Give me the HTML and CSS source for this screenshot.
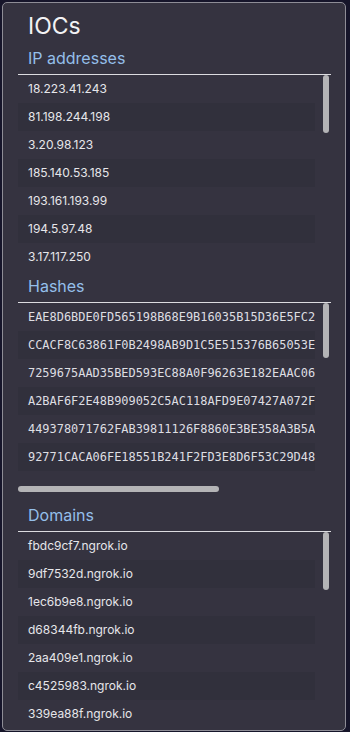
FILE: index.html
```html
<!DOCTYPE html>
<html lang="en">
<head>
<meta charset="utf-8">
<title>IOCs</title>
<link rel="stylesheet" href="styles.css">
</head>
<body>
<div class="panel">
  <h1 class="title">IOCs</h1>

  <h2 class="section">IP addresses</h2>
  <div class="list">
    <div class="rows">
      <div class="row">18.223.41.243</div>
      <div class="row">81.198.244.198</div>
      <div class="row">3.20.98.123</div>
      <div class="row">185.140.53.185</div>
      <div class="row">193.161.193.99</div>
      <div class="row">194.5.97.48</div>
      <div class="row">3.17.117.250</div>
    </div>
    <div class="vbar"><div class="vthumb"></div></div>
  </div>

  <h2 class="section">Hashes</h2>
  <div class="hashbox">
    <div class="rows rows-hash">
      <div class="row mono">EAE8D6BDE0FD565198B68E9B16035B15D36E5FC2A1B9E04D7C3F28A6B5E91D04</div>
      <div class="row mono">CCACF8C63861F0B2498AB9D1C5E515376B65053E7F2A94C10B8D6E35A29F4C71</div>
      <div class="row mono">7259675AAD35BED593EC88A0F96263E182EAAC06B4D17E9A3C5F82061DE4B7A9</div>
      <div class="row mono">A2BAF6F2E48B909052C5AC118AFD9E07427A072F9C3E61B5D08A4F27E6B13C58</div>
      <div class="row mono">449378071762FAB39811126F8860E3BE358A3B5A0E7D2C94F61B8A53D7C20E16</div>
      <div class="row mono">92771CACA06FE18551B241F2FD3E8D6F53C29D48B1A7E05C36F9D248E0A7B63F</div>
    </div>
    <div class="vbar vbar-hash"><div class="vthumb vthumb-hash"></div></div>
    <div class="hbar"><div class="hthumb"></div></div>
  </div>

  <h2 class="section section-domains">Domains</h2>
  <div class="list">
    <div class="rows">
      <div class="row">fbdc9cf7.ngrok.io</div>
      <div class="row">9df7532d.ngrok.io</div>
      <div class="row">1ec6b9e8.ngrok.io</div>
      <div class="row">d68344fb.ngrok.io</div>
      <div class="row">2aa409e1.ngrok.io</div>
      <div class="row">c4525983.ngrok.io</div>
      <div class="row">339ea88f.ngrok.io</div>
    </div>
    <div class="vbar"><div class="vthumb"></div></div>
  </div>
</div>
</body>
</html>
```
FILE: styles.css
```css
html, body {
  margin: 0;
  padding: 0;
  height: 732px;
  overflow: hidden;
  background: #16152a;
}

body {
  font-family: Inter, "Noto Sans", sans-serif;
  color: #e4e4e8;
}

.panel {
  box-sizing: border-box;
  margin: 2px 0 0 2px;
  width: 344px;
  height: 729px;
  border: 1px solid #8e8d96;
  border-radius: 5px;
  background: #353340;
  padding: 9px 14px 0 15px;
  overflow: hidden;
}

.title {
  margin: 0;
  padding-left: 10px;
  font-size: 23px;
  font-weight: 400;
  line-height: 28px;
  color: #f2f2f4;
}

.section {
  margin: 8px 0 0;
  padding: 0 0 6px 10px;
  font-size: 16px;
  font-weight: 400;
  line-height: 20px;
  color: #94bfea;
  border-bottom: 1px solid #dcdce0;
}

.list + .section {
  margin-top: 5px;
}

.section-domains {
  margin-top: 10px;
}

.list {
  display: flex;
}

.rows {
  width: 297px;
  height: 196px;
  overflow: hidden;
}

.row {
  height: 28px;
  line-height: 28px;
  padding-left: 10px;
  font-size: 12px;
  white-space: nowrap;
  color: #e6e6ea;
}

.row:nth-child(even) {
  background: #31303c;
}

.mono {
  font-family: "DejaVu Sans Mono", "Liberation Mono", monospace;
  font-size: 11.93px;
  color: #dedee2;
  overflow: hidden;
}

.vbar {
  width: 16px;
  box-sizing: border-box;
  padding-left: 8px;
}

.vthumb {
  width: 6px;
  height: 58px;
  border-radius: 3px;
  background: #b4b4b6;
}

.hashbox {
  display: grid;
  grid-template-columns: 297px 16px;
  grid-template-rows: 176px 16px;
}

.rows-hash {
  height: 176px;
}

.vthumb-hash {
  height: 55px;
}

.hbar {
  box-sizing: border-box;
  padding-top: 7px;
}

.hthumb {
  width: 201px;
  height: 6px;
  border-radius: 3px;
  background: #b4b4b6;
}
```
